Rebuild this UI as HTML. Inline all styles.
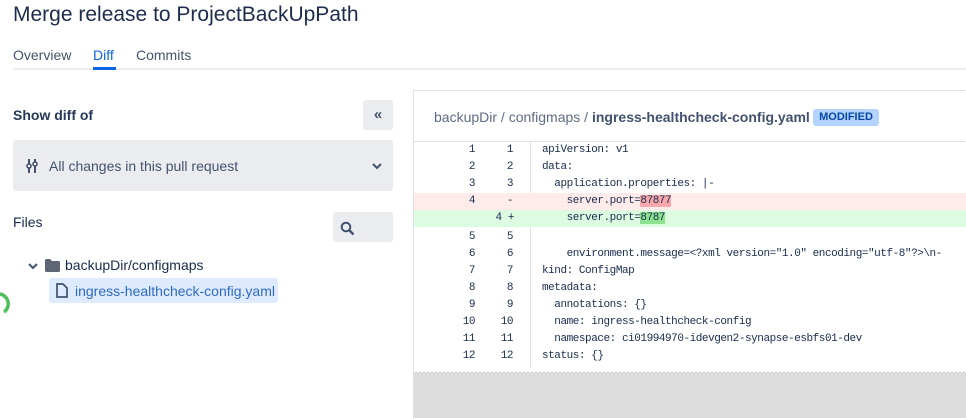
<!DOCTYPE html>
<html><head><meta charset="utf-8"><style>
body{margin:0;width:966px;height:418px;overflow:hidden;background:#fff;font-family:"Liberation Sans",sans-serif;color:#172B4D;position:relative}
.a{position:absolute}
.mono{font-family:"Liberation Mono",monospace;font-size:11px;letter-spacing:-0.45px;color:#172B4D}
.row{position:absolute;left:414px;width:552px;height:17px;line-height:17px}
.o{position:absolute;left:0;width:61px;text-align:right}
.n{position:absolute;left:60px;width:39px;text-align:right}
.c{position:absolute;left:128px;white-space:pre}
</style></head><body>
<div class="a" style="left:13px;top:3px;font-size:21px;color:#1d2b4c">Merge release to ProjectBackUpPath</div>
<div class="a" style="left:13px;top:47px;font-size:14px;color:#44546f">Overview</div>
<div class="a" style="left:93px;top:47px;font-size:14px;color:#0c66e4">Diff</div>
<div class="a" style="left:136px;top:47px;font-size:14px;color:#44546f">Commits</div>
<div class="a" style="left:13px;top:68px;width:953px;height:2px;background:#ebecf0"></div>
<div class="a" style="left:93px;top:67px;width:23px;height:3px;background:#0c66e4"></div>

<div class="a" style="left:13px;top:107px;font-size:14px;font-weight:bold;color:#253858">Show diff of</div>
<div class="a" style="left:363px;top:100px;width:30px;height:30px;background:#ebecf0;border-radius:3px;text-align:center;line-height:29px;font-size:15px;font-weight:bold;color:#42526e">«</div>
<div class="a" style="left:13px;top:140px;width:380px;height:51px;background:#ebecf0;border-radius:3px"></div>
<svg class="a" style="left:26px;top:158px" width="12" height="16" viewBox="0 0 12 16"><path d="M3 1v14M9 1v14" stroke="#42526e" stroke-width="2"/><circle cx="3" cy="8" r="2" fill="#fff" stroke="#42526e" stroke-width="1.6"/><circle cx="9" cy="6" r="2" fill="#fff" stroke="#42526e" stroke-width="1.6"/></svg>
<div class="a" style="left:49px;top:158px;font-size:14px;color:#42526e">All changes in this pull request</div>
<svg class="a" style="left:372px;top:162px" width="10" height="8"><path d="M1 2l4 4 4-4" stroke="#42526e" stroke-width="2" fill="none"/></svg>
<div class="a" style="left:13px;top:214px;font-size:14px;color:#172B4D">Files</div>
<div class="a" style="left:333px;top:212px;width:60px;height:30px;background:#ebecf0;border-radius:3px"></div>
<svg class="a" style="left:340px;top:221px" width="16" height="16"><circle cx="6" cy="6" r="4.3" stroke="#42526e" stroke-width="2" fill="none"/><path d="M9 9l4.5 4.5" stroke="#42526e" stroke-width="2.4"/></svg>
<svg class="a" style="left:28px;top:262px" width="10" height="8"><path d="M1 2l4 4 4-4" stroke="#42526e" stroke-width="2" fill="none"/></svg>
<svg class="a" style="left:45px;top:259px" width="15" height="13"><path d="M0 1.5Q0 0 1.5 0H5l2 2h6.5Q15 2 15 3.5V11.5Q15 13 13.5 13H1.5Q0 13 0 11.5Z" fill="#5e6676"/></svg>
<div class="a" style="left:65px;top:257px;font-size:14px;color:#172B4D">backupDir/configmaps</div>
<div class="a" style="left:49px;top:278px;width:229px;height:25px;background:#deebff;border-radius:3px"></div>
<svg class="a" style="left:56px;top:283px" width="12" height="15"><path d="M1 1h6l4 4v9H1z" stroke="#42526e" stroke-width="1.7" fill="none"/></svg>
<div class="a" style="left:75px;top:283px;font-size:14px;color:#2e6ac8">ingress-healthcheck-config.yaml</div>
<svg class="a" style="left:-8px;top:290px" width="20" height="28"><path d="M8 4 A10 10 0 0 1 12 22" stroke="#4fbf5a" stroke-width="3.5" fill="none"/></svg>

<div class="a" style="left:413px;top:90px;width:553px;height:328px;border-left:1px solid #dfe1e6;border-top:1px solid #dfe1e6"></div>
<div class="a" style="left:414px;top:141px;width:552px;height:1px;background:#dfe1e6"></div>
<div class="a" style="left:434px;top:109px;font-size:14px;color:#5e6c84">backupDir / configmaps / <b style="color:#42526e">ingress-healthcheck-config.yaml</b></div>
<div class="a" style="left:813px;top:109px;width:66px;height:17px;background:#b3d4ff;border-radius:3px;font-size:11px;font-weight:bold;color:#0747a6;text-align:center;line-height:17px">MODIFIED</div>
<div class="a" style="left:530px;top:142px;width:1px;height:227px;background:#dfe1e6"></div>
<div class="row" style="top:193px;background:#ffebe9"></div>
<div class="row" style="top:210px;background:#ddfbe0"></div>
<div class="mono">
<div class="row" style="top:142px"><span class="o">1</span><span class="n">1</span><span class="c">apiVersion: v1</span></div>
<div class="row" style="top:159px"><span class="o">2</span><span class="n">2</span><span class="c">data:</span></div>
<div class="row" style="top:176px"><span class="o">3</span><span class="n">3</span><span class="c">  application.properties: |-</span></div>
<div class="row" style="top:193px"><span class="o">4</span><span class="n">-</span><span class="c">    server.port=<span style="background:#f9a9ad">87877</span></span></div>
<div class="row" style="top:210px"><span class="n" style="width:50px;left:50px">4 +</span><span class="c">    server.port=<span style="background:#8de38f">8787</span></span></div>
<div class="row" style="top:229px"><span class="o">5</span><span class="n">5</span></div>
<div class="row" style="top:246px"><span class="o">6</span><span class="n">6</span><span class="c">    environment.message=&lt;?xml version="1.0" encoding="utf-8"?&gt;\n-</span></div>
<div class="row" style="top:263px"><span class="o">7</span><span class="n">7</span><span class="c">kind: ConfigMap</span></div>
<div class="row" style="top:280px"><span class="o">8</span><span class="n">8</span><span class="c">metadata:</span></div>
<div class="row" style="top:297px"><span class="o">9</span><span class="n">9</span><span class="c">  annotations: {}</span></div>
<div class="row" style="top:314px"><span class="o">10</span><span class="n">10</span><span class="c">  name: ingress-healthcheck-config</span></div>
<div class="row" style="top:331px"><span class="o">11</span><span class="n">11</span><span class="c">  namespace: ci01994970-idevgen2-synapse-esbfs01-dev</span></div>
<div class="row" style="top:348px"><span class="o">12</span><span class="n">12</span><span class="c">status: {}</span></div>
</div>
<div class="a" style="left:414px;top:374px;width:552px;height:44px;background:#dcdcdc"></div>
<svg class="a" style="left:414px;top:371px" width="552" height="5"><defs><pattern id="z" width="4" height="5" patternUnits="userSpaceOnUse"><path d="M0 3L2 1L4 3" stroke="#c8c8c8" fill="#fff"/></pattern></defs><rect width="552" height="5" fill="url(#z)"/></svg>
</body></html>
